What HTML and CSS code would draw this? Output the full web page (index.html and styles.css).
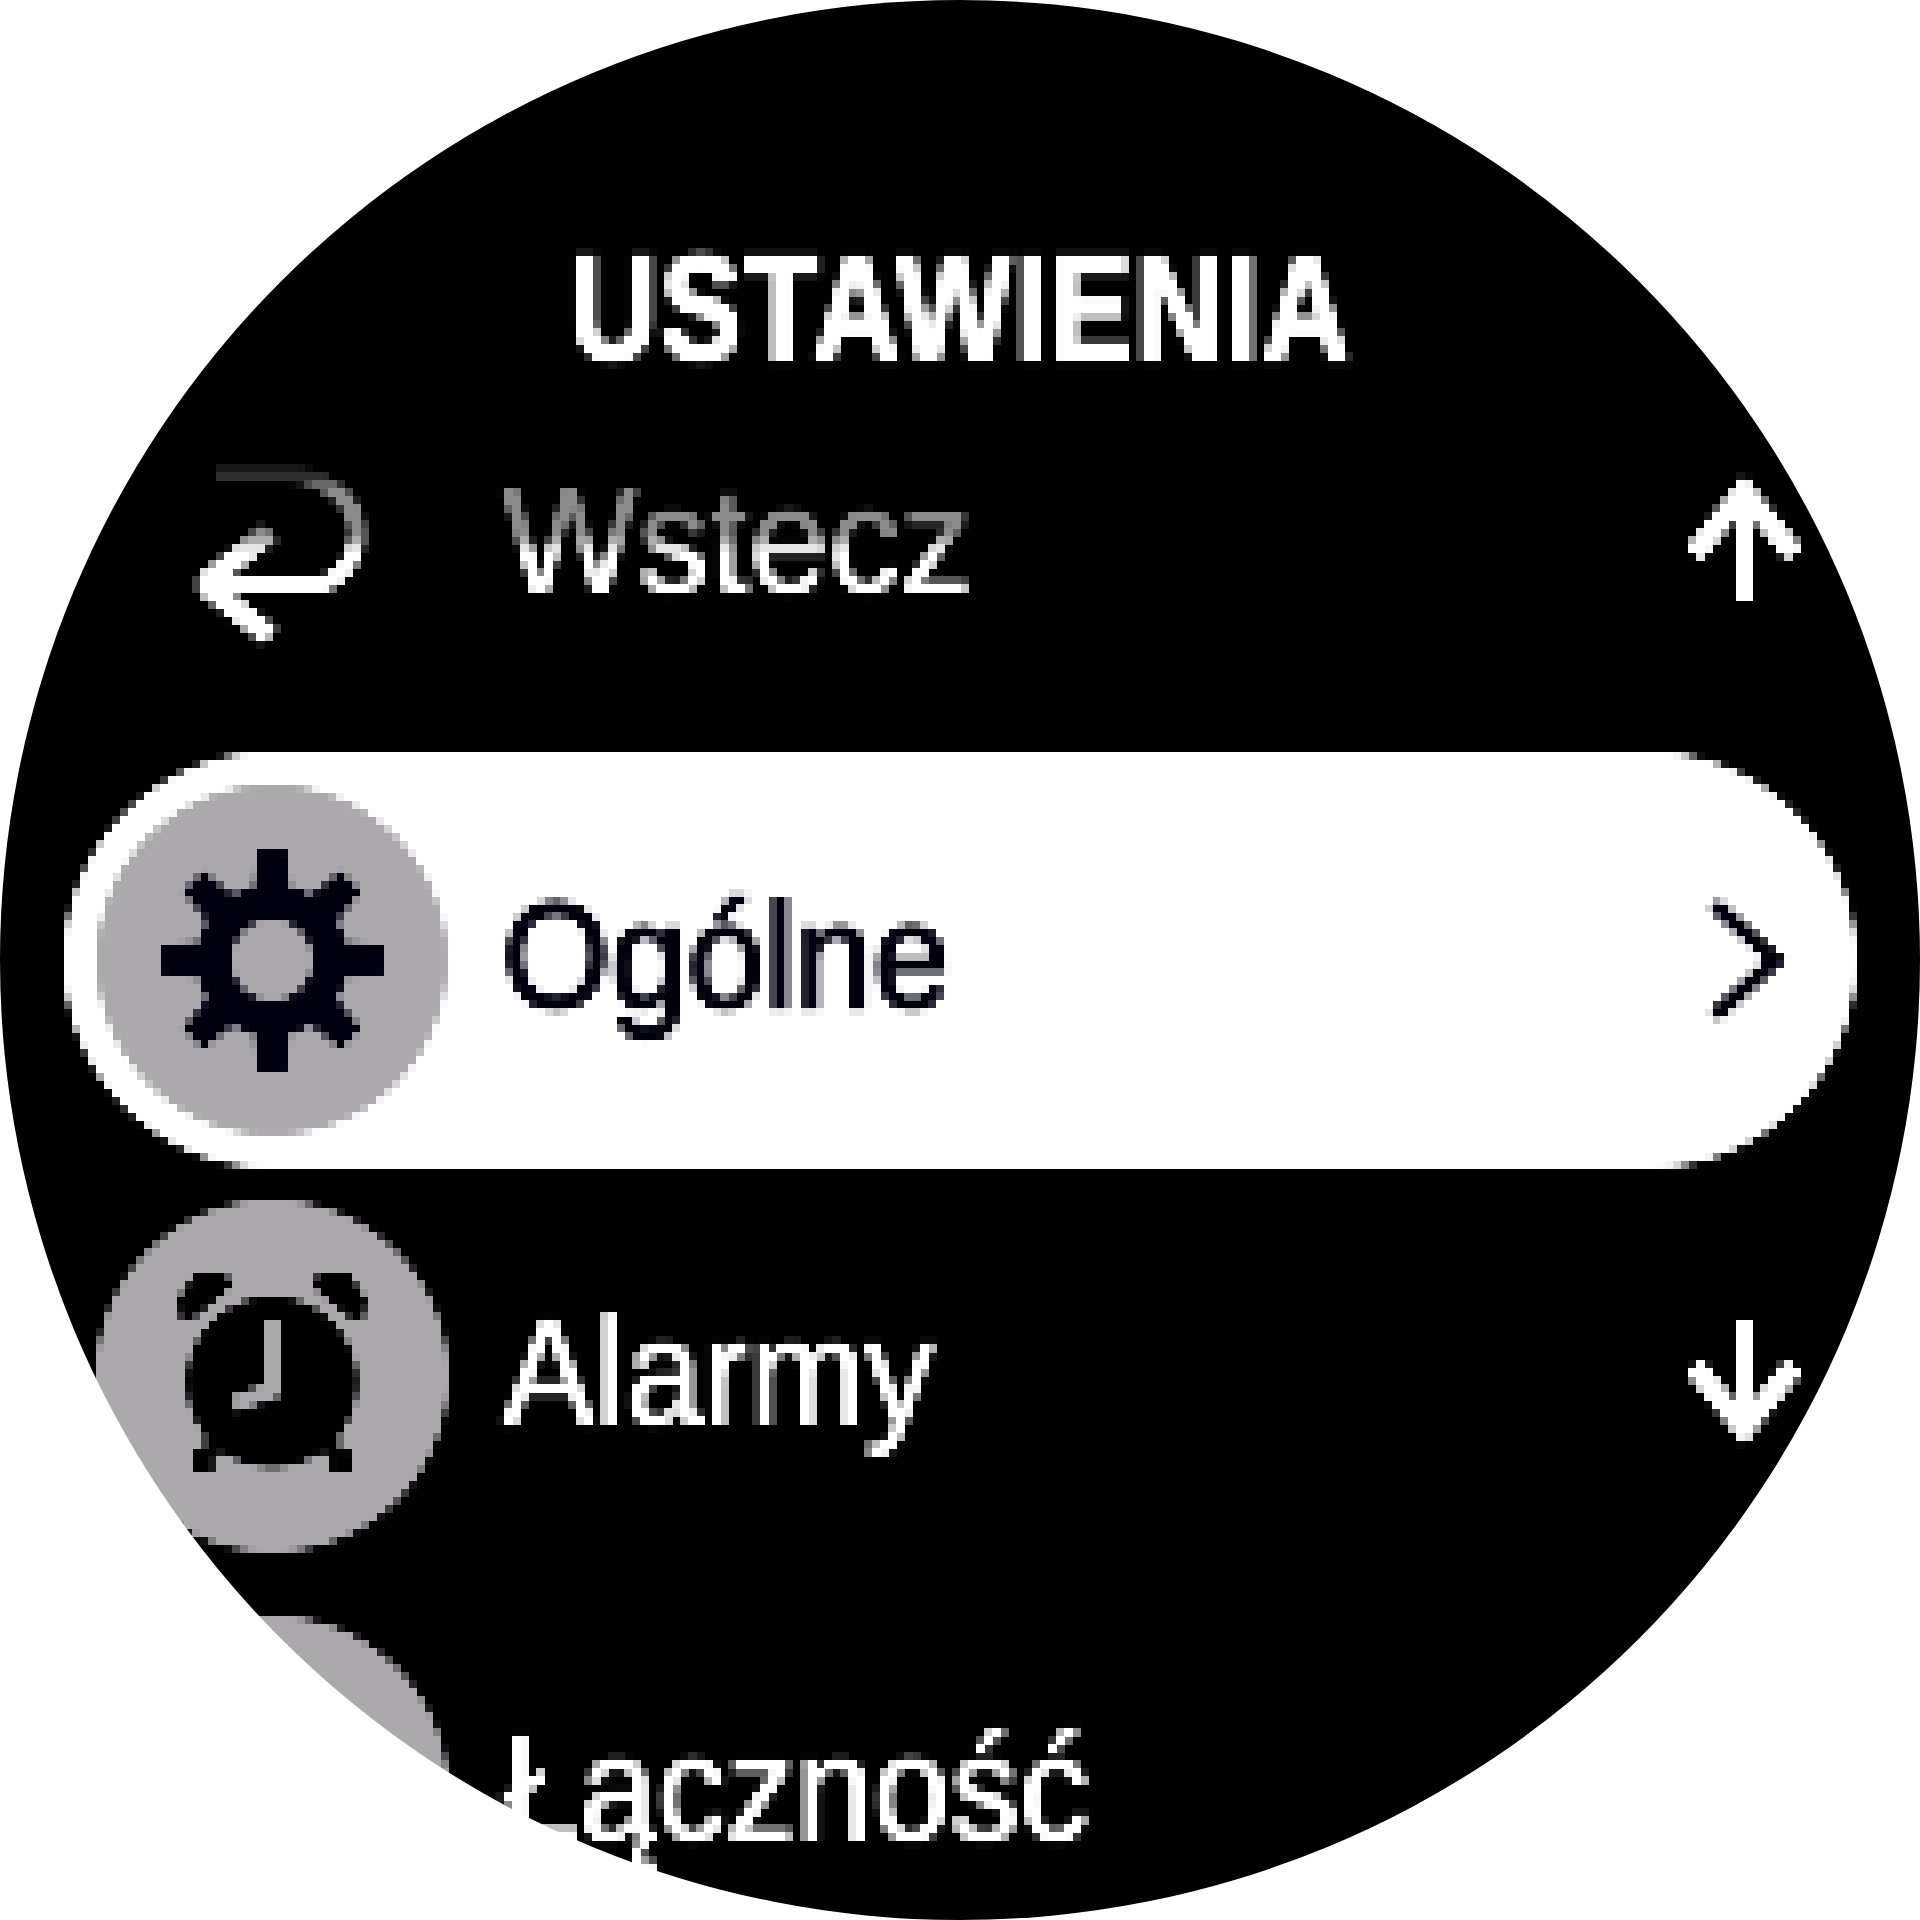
FILE: index.html
```html
<!DOCTYPE html>
<html lang="pl">
<head>
    <meta charset="UTF-8">
    <meta name="viewport" content="width=device-width, initial-scale=1.0">
    <title>Ustawienia</title>
    <link rel="stylesheet" href="styles.css">
</head>
<body>
    <!-- the reference is a 240px watch screen blown up 8x, this filter gives the same blocks -->
    <svg class="filter-defs" aria-hidden="true">
        <filter id="pixelate" filterUnits="userSpaceOnUse" primitiveUnits="userSpaceOnUse" x="0" y="0" width="1920" height="1920" color-interpolation-filters="sRGB">
            <feGaussianBlur in="SourceGraphic" stdDeviation="1.6" result="soft"/>
            <feFlood x="4" y="4" width="1" height="1" flood-color="#000"/>
            <feComposite width="8" height="8"/>
            <feTile result="dots"/>
            <feComposite in="soft" in2="dots" operator="in"/>
            <feMorphology operator="dilate" radius="4"/>
        </filter>
    </svg>

    <div class="watch">
        <div class="screen">
            <h1 class="title"><span>USTAWIENIA</span></h1>

            <!-- Back -->
            <div class="row">
                <div class="row-main faded">
                    <div class="icon no-bg">
                        <svg viewBox="0 0 352 352">
                            <path class="line head bevel" d="M174 164 L108 216 L174 268"/>
                            <path class="line" d="M104 216 H226 C246 210 261 188 261 165 C261 130 225 106 190 106 H120"/>
                        </svg>
                    </div>
                    <span class="label label-wide">Wstecz</span>
                </div>
                <svg class="arrow" viewBox="0 0 112 144">
                    <path class="line" d="M56 20 V128"/>
                    <path class="line head" d="M6 82 L56 20 L106 82"/>
                </svg>
            </div>

            <!-- General, selected -->
            <div class="row active">
                <div class="row-main">
                    <div class="icon">
                        <svg viewBox="0 0 352 352">
                            <defs>
                                <polygon id="tooth" points="-20,-60 -15,-112 15,-112 20,-60"/>
                            </defs>
                            <g class="gear" transform="translate(176 176)">
                                <use href="#tooth"/>
                                <use href="#tooth" transform="rotate(45)"/>
                                <use href="#tooth" transform="rotate(90)"/>
                                <use href="#tooth" transform="rotate(135)"/>
                                <use href="#tooth" transform="rotate(180)"/>
                                <use href="#tooth" transform="rotate(225)"/>
                                <use href="#tooth" transform="rotate(270)"/>
                                <use href="#tooth" transform="rotate(315)"/>
                                <circle class="gear-ring" r="58"/>
                            </g>
                        </svg>
                    </div>
                    <span class="label">Ogólne</span>
                </div>
                <svg class="arrow" viewBox="0 0 112 144">
                    <path class="line" d="M26 16 L88 72 L26 128"/>
                </svg>
            </div>

            <!-- Alarms -->
            <div class="row">
                <div class="row-main">
                    <div class="icon">
                        <svg class="clock" viewBox="0 0 352 352">
                            <path d="M100 74 H129 L134 85 L126 93 L96 118 H86 L83 100 Z"/>
                            <path d="M252 74 H223 L218 85 L226 93 L256 118 H266 L269 100 Z"/>
                            <circle cx="176" cy="182" r="84"/>
                            <rect x="110" y="220" width="132" height="32"/>
                            <rect x="98" y="252" width="18" height="18"/>
                            <rect x="236" y="252" width="18" height="18"/>
                            <path class="hands" d="M176 120 V190 L138 204"/>
                        </svg>
                    </div>
                    <span class="label">Alarmy</span>
                </div>
                <svg class="arrow" viewBox="0 0 112 144">
                    <path class="line" d="M56 16 V124"/>
                    <path class="line head" d="M6 62 L56 124 L106 62"/>
                </svg>
            </div>

            <!-- Connectivity, cut off by the bezel -->
            <div class="row">
                <div class="row-main">
                    <div class="icon"></div>
                    <span class="label">Łączność</span>
                </div>
            </div>
        </div>
    </div>
</body>
</html>
```

FILE: styles.css
```css
html, body {
    margin: 0;
    height: 100%;
    background: #fff;
    overflow: hidden;
}

.filter-defs {
    position: absolute;
    width: 0;
    height: 0;
}

.watch {
    width: 1920px;
    height: 1920px;
    border-radius: 50%;
    overflow: hidden;
}

.screen {
    height: 1920px;
    background: #000;
    color: #fff;
    font-family: "Liberation Sans", Arial, sans-serif;
    filter: url(#pixelate);
    overflow: hidden;
}

.title {
    box-sizing: border-box;
    height: 336px;
    margin: 0;
    padding-top: 232px;
    font-size: 151px;
    font-weight: bold;
    line-height: 1;
    letter-spacing: 3px;
    text-align: center;
    -webkit-text-stroke: 3px currentColor;
}

.title span {
    display: block;
    transform: translateX(1px) scaleX(0.81);
}

.row {
    display: flex;
    align-items: center;
    box-sizing: border-box;
    height: 416px;
    margin: 0 64px;
    padding: 0 56px 0 32px;
    border-radius: 208px;
}

.row.active {
    background: #fff;
    color: #00000f;
}

.row-main {
    display: flex;
    flex: 1;
    align-items: center;
    gap: 54px;
    height: 100%;
}

.row-main.faded {
    -webkit-mask-image: linear-gradient(to bottom, rgba(0, 0, 0, 0.1) 33%, rgba(0, 0, 0, 0.55) 37%, rgba(0, 0, 0, 0.55) 48%, #000 52%);
    mask-image: linear-gradient(to bottom, rgba(0, 0, 0, 0.1) 33%, rgba(0, 0, 0, 0.55) 37%, rgba(0, 0, 0, 0.55) 48%, #000 52%);
}

.icon {
    flex: none;
    width: 352px;
    height: 352px;
    border-radius: 50%;
    background: #aba9ac;
    color: #000;
}

.icon.no-bg {
    background: none;
    color: #fff;
}

.icon svg {
    display: block;
    width: 352px;
    height: 352px;
    fill: currentColor;
}

.clock {
    stroke: #000;
    stroke-width: 4;
}

.label {
    display: block;
    padding-bottom: 8px;
    font-size: 151px;
    -webkit-text-stroke: 2px currentColor;
    transform: scaleX(0.92);
    transform-origin: left center;
}

.label-wide {
    -webkit-text-stroke: 1px currentColor;
    transform: scaleX(0.95);
}

.active .label {
    -webkit-text-stroke: 5px currentColor;
}

.arrow {
    flex: none;
    width: 112px;
    height: 144px;
}

.line {
    fill: none;
    stroke: currentColor;
    stroke-width: 16;
}

.head {
    stroke-width: 21;
}

.bevel {
    stroke-linejoin: bevel;
}

.gear {
    fill: #00000f;
}

.gear-ring {
    fill: none;
    stroke: #00000f;
    stroke-width: 36;
}

.clock .hands {
    fill: none;
    stroke: #aba9ac;
    stroke-width: 16;
}
```
